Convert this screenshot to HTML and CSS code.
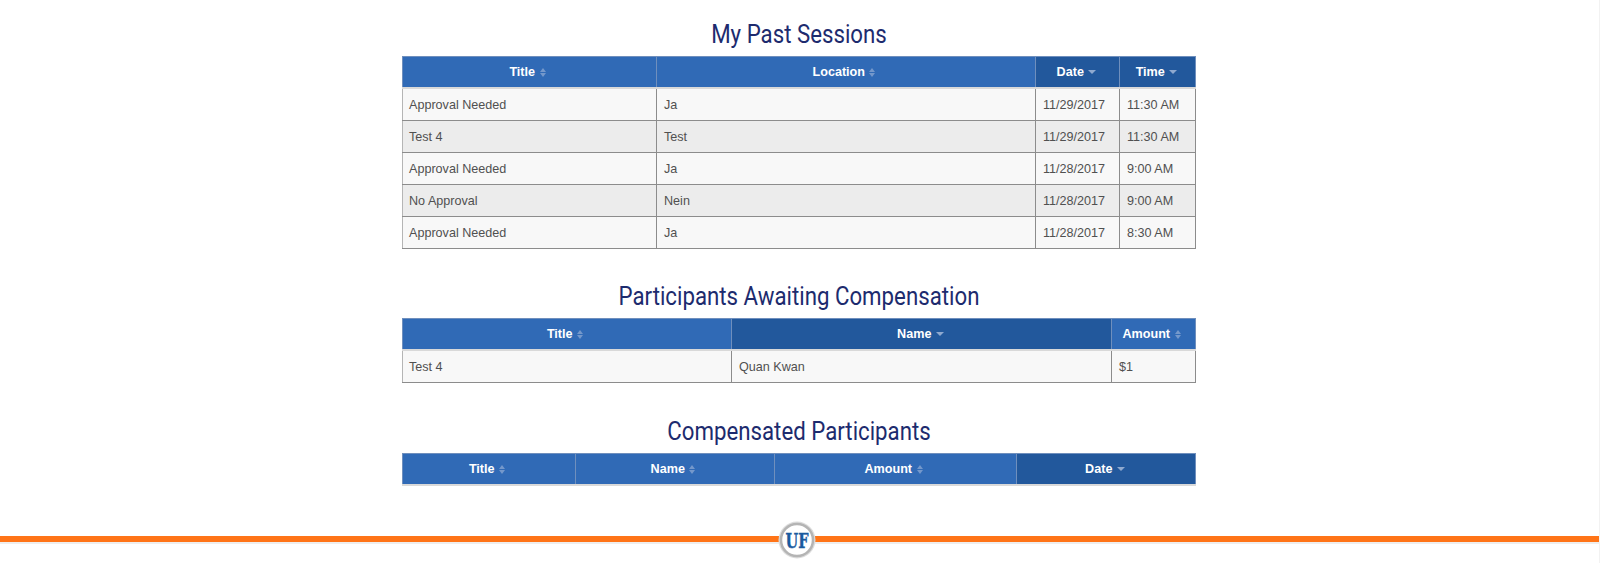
FILE: index.html
```html
<!DOCTYPE html>
<html>
<head>
  <title>Sessions</title>
  <link rel="stylesheet" href="styles.css">
</head>
<body>
  <div class="content">
    <h2>My Past Sessions</h2>
    <table class="past">
      <thead>
        <tr>
          <th>Title <span class="sort"></span></th>
          <th>Location <span class="sort"></span></th>
          <th class="active">Date <span class="desc"></span></th>
          <th class="active">Time <span class="desc"></span></th>
        </tr>
      </thead>
      <tbody>
        <tr><td>Approval Needed</td><td>Ja</td><td>11/29/2017</td><td>11:30 AM</td></tr>
        <tr><td>Test 4</td><td>Test</td><td>11/29/2017</td><td>11:30 AM</td></tr>
        <tr><td>Approval Needed</td><td>Ja</td><td>11/28/2017</td><td>9:00 AM</td></tr>
        <tr><td>No Approval</td><td>Nein</td><td>11/28/2017</td><td>9:00 AM</td></tr>
        <tr><td>Approval Needed</td><td>Ja</td><td>11/28/2017</td><td>8:30 AM</td></tr>
      </tbody>
    </table>

    <h2>Participants Awaiting Compensation</h2>
    <table class="awaiting">
      <thead>
        <tr>
          <th>Title <span class="sort"></span></th>
          <th class="active">Name <span class="desc"></span></th>
          <th>Amount <span class="sort"></span></th>
        </tr>
      </thead>
      <tbody>
        <tr><td>Test 4</td><td>Quan Kwan</td><td>$1</td></tr>
      </tbody>
    </table>

    <h2>Compensated Participants</h2>
    <table class="compensated">
      <thead>
        <tr>
          <th>Title <span class="sort"></span></th>
          <th>Name <span class="sort"></span></th>
          <th>Amount <span class="sort"></span></th>
          <th class="active">Date <span class="desc"></span></th>
        </tr>
      </thead>
    </table>
  </div>

  <div class="footer-line">
    <div class="logo">
      <svg width="38" height="38" viewBox="0 0 38 38">
        <circle cx="19" cy="19" r="18.5" fill="#dcdcdc"/>
        <circle cx="19" cy="19" r="16" fill="#fff" stroke="#b4b4b4" stroke-width="2.5"/>
        <text x="19" y="26.5" text-anchor="middle" textLength="23" lengthAdjust="spacingAndGlyphs" class="logo-text">UF</text>
      </svg>
    </div>
  </div>
</body>
</html>
```

FILE: styles.css
```css
body {
  font-family: "Liberation Sans", Arial, sans-serif;
  background-color: #fff;
  margin: 0;
  padding: 0;
  color: #505050;
  border-right: 1px solid #f2f2f2;
}

.content {
  padding: 17px 403px 0 402px;
}

h2 {
  font-family: Roboto, sans-serif;
  font-weight: 400;
  font-size: 25px;
  line-height: 36px;
  margin: 0 0 3px 0;
  text-align: center;
  color: #1d2b6e;
  transform: scaleX(0.89);
}

table {
  width: 794px;
  border-collapse: collapse;
  table-layout: fixed;
  font-size: 12.6px;
  margin-bottom: 31px;
}

th {
  height: 30px;
  padding: 0 4px 0 0;
  background-color: #306ab6;
  color: #fff;
  font-weight: bold;
  text-align: center;
  border: 1px solid #6f8fbd;
  border-bottom: 2px solid #d9d9d9;
}

th.active {
  background-color: #22589c;
  padding-right: 2px;
}

td {
  height: 31px;
  padding: 0 7px;
  border: 1px solid #8c8c8c;
  background-color: #f8f8f8;
}

td:first-child {
  padding-left: 6px;
  border-left-color: #b5b5b5;
}

tbody tr:nth-child(even) td {
  background-color: #ececec;
}

.sort {
  display: inline-block;
  position: relative;
  width: 6px;
  height: 9px;
  vertical-align: -1px;
  margin-left: 1px;
}

.sort::before, .sort::after {
  content: "";
  position: absolute;
  left: 0;
  border-left: 3px solid transparent;
  border-right: 3px solid transparent;
}

.sort::before {
  top: 0;
  border-bottom: 4px solid #7498cb;
}

.sort::after {
  bottom: 0;
  border-top: 4px solid #7498cb;
}

.desc {
  display: inline-block;
  width: 0;
  height: 0;
  vertical-align: 2px;
  margin-left: 1px;
  border-left: 4px solid transparent;
  border-right: 4px solid transparent;
  border-top: 4px solid #8fa9cf;
}

.past {
  margin-bottom: 30px;
}

.past th:nth-child(1) { width: 249px; }
.past th:nth-child(2) { width: 374px; }
.past th:nth-child(3) { width: 81px; }

.awaiting th:nth-child(1) { width: 324px; }
.awaiting th:nth-child(2) { width: 377px; }

.compensated th:nth-child(1) { width: 168px; }
.compensated th:nth-child(2) { width: 194px; }
.compensated th:nth-child(3) { width: 237px; }

.compensated {
  margin-bottom: 0;
}

.footer-line {
  position: relative;
  height: 6px;
  margin-top: 50px;
  margin-bottom: 21px;
  background-color: #ff7417;
  box-shadow: 0 2px 0 #eee;
}

.logo {
  position: absolute;
  left: 778px;
  top: -15px;
  width: 38px;
  height: 38px;
}

.logo-text {
  font-family: "DejaVu Serif", serif;
  font-weight: bold;
  font-size: 20px;
  fill: #1a5a9e;
  stroke: #1a5a9e;
  stroke-width: 0.4px;
}
```
